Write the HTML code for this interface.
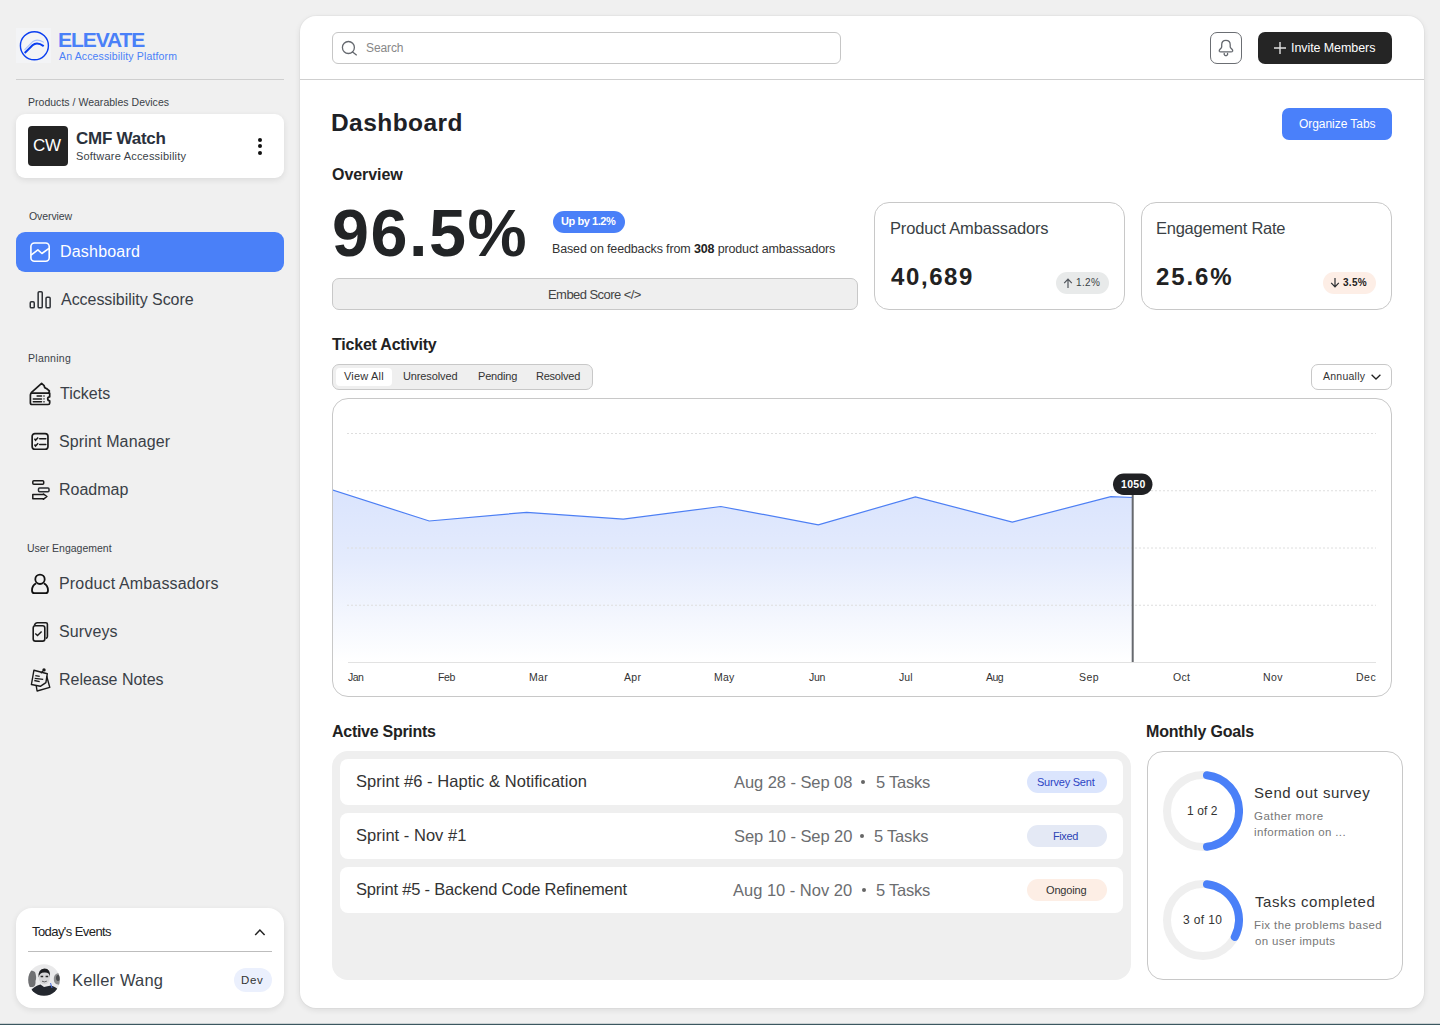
<!DOCTYPE html>
<html><head><meta charset="utf-8">
<style>
*{box-sizing:border-box;margin:0;padding:0}
html,body{width:1440px;height:1025px;overflow:hidden;background:#f0f0f0;font-family:"Liberation Sans",sans-serif;color:#222}
.a{position:absolute}
.t{position:absolute;white-space:nowrap;line-height:1}
</style></head>
<body>
<svg class="a" style="left:0;top:1020px" width="1440" height="5" viewBox="0 0 1440 5"><rect x="0" y="3.8" width="1440" height="1.2" fill="#3b5760"/></svg>
<!-- ===== SIDEBAR ===== -->
<div class="a" style="left:16px;top:28px;width:35px;height:35px;background:#f3f4f6"></div>
<svg class="a" style="left:14px;top:26px" width="40" height="40" viewBox="0 0 40 40">
  <circle cx="20.4" cy="19.75" r="14" fill="none" stroke="#0a3ef0" stroke-width="1.4"/>
  <path d="M10.5 23.8 L18.5 15.8 Q23 12.2 29.9 16.4" fill="none" stroke="#a9c0fb" stroke-width="1.1"/>
  <path d="M10.7 27 L18.5 19.2 Q23 15.2 29.7 20.1" fill="none" stroke="#0a3ef0" stroke-width="2"/>
</svg>
<div class="a" style="left:16px;top:79px;width:268px;height:1px;background:#cfcfcf"></div>
<div class="a" style="left:16px;top:114px;width:268px;height:64px;background:#fff;border-radius:9px;box-shadow:0 2px 6px rgba(0,0,0,.09)"></div>
<div class="a" style="left:28px;top:126px;width:40px;height:40px;background:#242424;border-radius:4px"></div>
<div class="a" style="left:258px;top:137.6px;width:4px;height:4px;border-radius:2px;background:#111"></div>
<div class="a" style="left:258px;top:144px;width:4px;height:4px;border-radius:2px;background:#111"></div>
<div class="a" style="left:258px;top:150.5px;width:4px;height:4px;border-radius:2px;background:#111"></div>

<div class="a" style="left:16px;top:232px;width:268px;height:40px;background:#4a80f8;border-radius:9px"></div>
<svg class="a" style="left:28px;top:240px" width="24" height="24" viewBox="0 0 24 24">
  <rect x="2.9" y="3" width="18.3" height="18.3" rx="3.5" fill="none" stroke="#fff" stroke-width="1.6"/>
  <path d="M3 15.2 L9.9 9.9 L13.9 13.5 L21 8.4" fill="none" stroke="#fff" stroke-width="1.6" stroke-linejoin="round"/>
</svg>
<svg class="a" style="left:28px;top:288px" width="24" height="24" viewBox="0 0 24 24">
  <rect x="2.25" y="13.85" width="4" height="5.9" rx="1.1" fill="none" stroke="#2e3136" stroke-width="1.5"/>
  <rect x="10.15" y="3.75" width="4.1" height="16" rx="1.1" fill="none" stroke="#2e3136" stroke-width="1.5"/>
  <rect x="18.05" y="9.15" width="4.1" height="10.6" rx="1.1" fill="none" stroke="#2e3136" stroke-width="1.5"/>
</svg>
<!-- tickets -->
<svg class="a" style="left:28px;top:382px" width="24" height="24" viewBox="0 0 24 24">
  <path d="M3 10.9 L13.6 1.4 L16.1 3.6 Q16.3 6 18.5 6.5 L21.4 8.9 Q21.6 10.2 20.2 10.9" fill="none" stroke="#1a1a1a" stroke-width="1.7" stroke-linejoin="round"/>
  <path d="M4 11.2 H21.7 V14.8 A2 2 0 0 0 21.7 18.8 V21 Q21.7 22.5 20.2 22.5 H4 Q2.4 22.5 2.4 20.9 V12.8 Q2.4 11.2 4 11.2 Z" fill="none" stroke="#1a1a1a" stroke-width="1.7" stroke-linejoin="round"/>
  <path d="M9.1 14 H13.5 M5.3 16.9 H13.5 M5.3 19.8 H13.5" stroke="#1a1a1a" stroke-width="1.5" stroke-linecap="round"/>
  <path d="M16 13.3 V14.7 M16 16.2 V17.6 M16 19.1 V20.5" stroke="#333" stroke-width="1.3"/>
</svg>
<!-- sprint manager -->
<svg class="a" style="left:28px;top:430px" width="24" height="24" viewBox="0 0 24 24">
  <rect x="4.15" y="3.55" width="15.8" height="15.7" rx="2.8" fill="none" stroke="#1a1a1a" stroke-width="1.7"/>
  <path d="M6.5 8.7 L7.5 10.2 L10.2 7.4 M6.5 14.5 L7.5 16 L10.2 13.2" fill="none" stroke="#1a1a1a" stroke-width="1.5"/>
  <path d="M11.7 8.7 H17.8 M11.7 14.5 H17.8" stroke="#1a1a1a" stroke-width="1.5" stroke-linecap="round"/>
</svg>
<!-- roadmap -->
<svg class="a" style="left:28px;top:478px" width="24" height="24" viewBox="0 0 24 24">
  <rect x="4.8" y="2.8" width="10.9" height="3.5" rx="1" fill="none" stroke="#1a1a1a" stroke-width="1.5"/>
  <rect x="10.5" y="9.9" width="10.5" height="3.8" rx="1" fill="none" stroke="#2a2d30" stroke-width="1.5"/>
  <path d="M4.8 16.6 H15.3 V15.9 L18.9 18.5 L15.3 21.3 V20.7 H4.8 Z" fill="none" stroke="#1a1a1a" stroke-width="1.5" stroke-linejoin="round"/>
</svg>
<!-- person -->
<svg class="a" style="left:28px;top:572px" width="24" height="24" viewBox="0 0 24 24">
  <circle cx="12" cy="7.3" r="4.7" fill="none" stroke="#111" stroke-width="1.8"/>
  <path d="M8 11.4 Q4 13.6 4 18.4 Q4 21.1 6.4 21.1 H17.6 Q20 21.1 20 18.4 Q20 13.6 16 11.4" fill="none" stroke="#111" stroke-width="1.8" stroke-linejoin="round"/>
</svg>
<!-- surveys -->
<svg class="a" style="left:28px;top:620px" width="24" height="24" viewBox="0 0 24 24">
  <path d="M6.4 5.6 Q7 2.7 9.4 2.7 H17.9 Q19.4 2.7 19.4 4.2 V16.6 Q19.4 18.2 17.8 18.4" fill="none" stroke="#1a1a1a" stroke-width="1.6"/>
  <rect x="5.2" y="5.7" width="11.6" height="15.4" rx="2.2" fill="none" stroke="#1a1a1a" stroke-width="1.6"/>
  <path d="M7.3 13.6 L9.5 15.6 L13.6 11.4" fill="none" stroke="#1a1a1a" stroke-width="1.4"/>
</svg>
<!-- release notes -->
<svg class="a" style="left:28px;top:668px" width="24" height="24" viewBox="0 0 24 24">
  <path d="M8.2 17.7 L9.1 23 L21.8 19.4 L18.7 8.3" fill="none" stroke="#1a1a1a" stroke-width="1.4" stroke-linejoin="round"/>
  <path d="M5.9 2.3 L19.3 5.7 L17.9 14.7 L12.3 18.3 L3.4 16.5 Z" fill="none" stroke="#1a1a1a" stroke-width="1.4" stroke-linejoin="round"/>
  <path d="M7.3 7.6 L11.7 8.4 M6.7 10.3 L15.2 11.4 M6.3 12.5 L11.7 13.6" stroke="#1a1a1a" stroke-width="1.3"/>
  <circle cx="16" cy="1.9" r="1.7" fill="#1a1a1a"/>
  <path d="M15 3 L12.8 5.2" stroke="#1a1a1a" stroke-width="1.3"/>
</svg>

<!-- today's events -->
<div class="a" style="left:16px;top:908px;width:268px;height:100px;background:#fff;border-radius:16px;box-shadow:0 2px 6px rgba(0,0,0,.09)"></div>
<svg class="a" style="left:253px;top:927px" width="14" height="10" viewBox="0 0 14 10"><path d="M2.2 8 L6.9 3 L11.6 8" fill="none" stroke="#222" stroke-width="1.5"/></svg>
<div class="a" style="left:28px;top:951px;width:244px;height:1px;background:#bdbdbd"></div>
<svg class="a" style="left:28px;top:964px" width="32" height="32" viewBox="0 0 32 32">
  <defs><clipPath id="av"><circle cx="16" cy="16" r="15.8"/></clipPath></defs>
  <g clip-path="url(#av)">
    <rect width="32" height="32" fill="#e9e9ea"/>
    <path d="M0 8 Q3 5 7 8 Q9 13 7.5 17 Q8 22 5 23 L0 23 Z" fill="#6f7072"/>
    <path d="M32 9 Q27 9 26 13 Q25 18 28 20 L32 21 Z" fill="#8a8b8d"/><ellipse cx="30" cy="14" rx="2" ry="3" fill="#4a4b4d"/>
    <ellipse cx="16.3" cy="13" rx="5.6" ry="7.4" fill="#d6d6d7"/>
    <path d="M10.6 13.5 Q9.8 5 16.5 4.6 Q22.8 4.8 22 13 Q21.3 8.2 16.5 8.6 Q11.6 8.4 10.6 13.5Z" fill="#1c1d20"/>
    <path d="M12.6 12.4 h2.6 M17.6 12.4 h2.6" stroke="#2a2a2a" stroke-width="1.5"/><path d="M14 17.2 Q16.3 18.6 18.8 17.2" fill="none" stroke="#555" stroke-width="0.9"/>
    <path d="M0 32 L2.5 27 Q6 22 12.5 20.5 L16 23 L23 21.5 Q28.5 23 32 27.5 L32 32 Z" fill="#23272e"/>
    <path d="M22.5 19 L24 24" stroke="#4a6ee0" stroke-width="1"/>
  </g>
</svg>
<div class="a" style="left:234px;top:968px;width:38px;height:23.5px;border-radius:12px;background:#ebf0fd"></div>

<!-- ===== MAIN ===== -->
<div class="a" style="left:300px;top:16px;width:1124px;height:992px;background:#fff;border-radius:16px;box-shadow:0 0 0 1px rgba(0,0,0,.025),0 2px 6px rgba(0,0,0,.09)"></div>
<div class="a" style="left:332px;top:32px;width:509px;height:32px;border:1px solid #c6c6c6;border-radius:6px"></div>
<svg class="a" style="left:339px;top:38px" width="20" height="20" viewBox="0 0 20 20"><circle cx="9.4" cy="9.5" r="6" fill="none" stroke="#64686e" stroke-width="1.3"/><path d="M13.6 13.9 L17.4 16.9" stroke="#64686e" stroke-width="1.3" stroke-linecap="round"/></svg>
<div class="a" style="left:1210px;top:32px;width:32px;height:32px;border:1.2px solid #6b6e73;border-radius:7px"></div>
<svg class="a" style="left:1216px;top:38px" width="20" height="20" viewBox="0 0 20 20"><path d="M5.7 8.8 V6.8 Q5.7 2.4 9.9 2.4 Q14.2 2.4 14.2 6.8 V8.8 Q14.2 9.6 15 10.3 L16 11.3 Q17 12.3 16.6 13.2 Q16.2 13.9 15 13.9 H4.8 Q3.6 13.9 3.3 13.2 Q3 12.3 4 11.3 L5 10.3 Q5.7 9.6 5.7 8.8 Z" fill="none" stroke="#64686e" stroke-width="1.3" stroke-linejoin="round"/><path d="M8.4 14.9 A1.75 1.75 0 1 0 11.4 14.9" fill="none" stroke="#64686e" stroke-width="1.3"/></svg>
<div class="a" style="left:1258px;top:32px;width:134px;height:32px;background:#252525;border-radius:7px"></div>
<svg class="a" style="left:1272px;top:40px" width="16" height="16" viewBox="0 0 16 16"><path d="M8 2 V14 M2 8 H14" stroke="#e0e0e0" stroke-width="1.4"/></svg>
<div class="a" style="left:300px;top:79px;width:1124px;height:1px;background:#cfcfcf"></div>
<div class="a" style="left:1282px;top:107.5px;width:110px;height:32px;background:#4a80fa;border-radius:7px"></div>

<div class="a" style="left:553px;top:211px;width:72px;height:22px;background:#4a80f8;border-radius:11px"></div>
<div class="a" style="left:332px;top:278px;width:526px;height:32px;background:#efefef;border:1px solid #c8c8c8;border-radius:7px"></div>

<div class="a" style="left:874px;top:202px;width:251px;height:108px;border:1px solid #c8c8c8;border-radius:15px"></div>
<div class="a" style="left:1056px;top:272px;width:53px;height:22px;background:#e8eaea;border-radius:11px"></div>
<svg class="a" style="left:1062px;top:277px" width="12" height="12" viewBox="0 0 12 12"><path d="M6 11 V2.6 M2.2 6.2 L6 2.2 L9.8 6.2" fill="none" stroke="#50555c" stroke-width="1.2"/></svg>
<div class="a" style="left:1141px;top:202px;width:251px;height:108px;border:1px solid #c8c8c8;border-radius:15px"></div>
<div class="a" style="left:1323px;top:272px;width:53px;height:22px;background:#fdeee6;border-radius:11px"></div>
<svg class="a" style="left:1329px;top:277px" width="12" height="12" viewBox="0 0 12 12"><path d="M6 1 V9.4 M2.2 5.8 L6 9.8 L9.8 5.8" fill="none" stroke="#2a2d31" stroke-width="1.2"/></svg>

<div class="a" style="left:332px;top:364px;width:261px;height:25.5px;background:#efefef;border:1px solid #c8c8c8;border-radius:7px"></div>
<div class="a" style="left:336px;top:368px;width:56px;height:18px;background:#fff;border-radius:4px"></div>
<div class="a" style="left:1311px;top:364px;width:81px;height:25.5px;border:1px solid #c8c8c8;border-radius:7px"></div>
<svg class="a" style="left:1369px;top:370px" width="14" height="14" viewBox="0 0 14 14"><path d="M2.6 4.8 L7 9 L11.4 4.8" fill="none" stroke="#222" stroke-width="1.3"/></svg>

<!-- chart -->
<div class="a" style="left:332px;top:398px;width:1060px;height:298.5px;border:1px solid #c8c8c8;border-radius:16px;overflow:hidden">
<svg class="a" style="left:-1px;top:-1px" width="1060" height="299" viewBox="332 398 1060 299">
  <defs><linearGradient id="ar" x1="0" y1="0" x2="0" y2="1">
    <stop offset="0" stop-color="#dae4fd"/><stop offset="0.4" stop-color="#e4ebfd"/><stop offset="0.75" stop-color="#f4f7fe"/><stop offset="1" stop-color="#ffffff"/></linearGradient></defs>
  <path d="M332 489.8 L429.2 521 L526.7 512.3 L623.3 519.2 L720.8 506.5 L818.3 524.8 L915.4 496.9 L1012.3 522.1 L1110.8 496.7 L1132.7 497.5 L1132.7 662 L332 662 Z" fill="url(#ar)"/>
  <g stroke="#dedede" stroke-width="1" stroke-dasharray="2 2">
    <path d="M347 433.5 H1376 M347 490.75 H1376 M347 548 H1376 M347 605.25 H1376"/>
  </g>
  <path d="M348 662.5 H1376" stroke="#e2e2e2" stroke-width="1"/>
  <path d="M332 489.8 L429.2 521 L526.7 512.3 L623.3 519.2 L720.8 506.5 L818.3 524.8 L915.4 496.9 L1012.3 522.1 L1110.8 496.7 L1132.7 497.5" fill="none" stroke="#4d7ff4" stroke-width="1.2"/>
  <path d="M1132.7 494 V662" stroke="#66696e" stroke-width="2"/>
  <rect x="1113" y="473.5" width="39.5" height="21.5" rx="10.75" fill="#202124"/>
</svg>
</div>

<!-- active sprints -->
<div class="a" style="left:332px;top:751px;width:799px;height:229px;background:#efefef;border-radius:16px"></div>
<div class="a" style="left:340px;top:759px;width:783px;height:46px;background:#fff;border-radius:8px"></div>
<div class="a" style="left:340px;top:813px;width:783px;height:46px;background:#fff;border-radius:8px"></div>
<div class="a" style="left:340px;top:867px;width:783px;height:46px;background:#fff;border-radius:8px"></div>
<div class="a" style="left:861.4px;top:780px;width:4px;height:4px;border-radius:2px;background:#666"></div>
<div class="a" style="left:860.3px;top:834px;width:4px;height:4px;border-radius:2px;background:#666"></div>
<div class="a" style="left:862.3px;top:888px;width:4px;height:4px;border-radius:2px;background:#666"></div>
<div class="a" style="left:1027px;top:771px;width:80px;height:22px;border-radius:11px;background:#dbe5fd"></div>
<div class="a" style="left:1027px;top:825px;width:80px;height:22px;border-radius:11px;background:#e4e9f5"></div>
<div class="a" style="left:1027px;top:879px;width:80px;height:22px;border-radius:11px;background:#fdeee5"></div>

<!-- monthly goals -->
<div class="a" style="left:1147px;top:751px;width:256px;height:229px;border:1px solid #c8c8c8;border-radius:16px"></div>
<svg class="a" style="left:1163px;top:771px" width="80" height="80" viewBox="0 0 80 80">
  <circle cx="40" cy="40" r="36" fill="none" stroke="#efefef" stroke-width="8"/>
  <path d="M44.01 4.22 A36 36 0 0 1 44.01 75.78" fill="none" stroke="#4a80f8" stroke-width="8" stroke-linecap="round"/>
</svg>
<svg class="a" style="left:1163px;top:880px" width="80" height="80" viewBox="0 0 80 80">
  <circle cx="40" cy="40" r="36" fill="none" stroke="#efefef" stroke-width="8"/>
  <path d="M44.01 4.22 A36 36 0 0 1 71.79 56.90" fill="none" stroke="#4a80f8" stroke-width="8" stroke-linecap="round"/>
</svg>

<div class="t" style="left:58px;top:29px;font-size:21px;color:#4a80f8;font-weight:bold;letter-spacing:-1.07px">ELEVATE</div>
<div class="t" style="left:59px;top:51px;font-size:10.5px;color:#4a80f8;letter-spacing:0.15px">An Accessibility Platform</div>
<div class="t" style="left:28px;top:97px;font-size:10.5px;color:#3a3f47;letter-spacing:0.02px">Products / Wearables Devices</div>
<div class="t" style="left:33px;top:137px;font-size:17px;color:#ffffff;letter-spacing:-0.4px">CW</div>
<div class="t" style="left:76px;top:130px;font-size:17px;color:#2a313c;font-weight:bold;letter-spacing:-0.25px">CMF Watch</div>
<div class="t" style="left:76px;top:151px;font-size:11px;color:#3a3f47;letter-spacing:0.2px">Software Accessibility</div>
<div class="t" style="left:29px;top:211px;font-size:10.5px;color:#3a3f47;letter-spacing:-0.08px">Overview</div>
<div class="t" style="left:60px;top:244px;font-size:16px;color:#ffffff;letter-spacing:0.2px">Dashboard</div>
<div class="t" style="left:61px;top:292px;font-size:16px;color:#3a3f47;letter-spacing:-0.04px">Accessibility Score</div>
<div class="t" style="left:28px;top:353px;font-size:10.5px;color:#3a3f47;letter-spacing:0.27px">Planning</div>
<div class="t" style="left:60px;top:386px;font-size:16px;color:#3a3f47;letter-spacing:0.03px">Tickets</div>
<div class="t" style="left:59px;top:434px;font-size:16px;color:#3a3f47;letter-spacing:0.13px">Sprint Manager</div>
<div class="t" style="left:59px;top:482px;font-size:16px;color:#3a3f47">Roadmap</div>
<div class="t" style="left:27px;top:543px;font-size:10.5px;color:#3a3f47">User Engagement</div>
<div class="t" style="left:59px;top:576px;font-size:16px;color:#3a3f47;letter-spacing:0.16px">Product Ambassadors</div>
<div class="t" style="left:59px;top:624px;font-size:16px;color:#3a3f47;letter-spacing:0.13px">Surveys</div>
<div class="t" style="left:59px;top:672px;font-size:16px;color:#3a3f47;letter-spacing:-0.03px">Release Notes</div>
<div class="t" style="left:32px;top:925px;font-size:13px;color:#222222;letter-spacing:-0.57px">Today's Events</div>
<div class="t" style="left:72px;top:972px;font-size:16.5px;color:#3a3f47;letter-spacing:0.17px">Keller Wang</div>
<div class="t" style="left:241px;top:975px;font-size:11.5px;color:#333333;letter-spacing:0.7px">Dev</div>
<div class="t" style="left:366px;top:42px;font-size:12px;color:#888888;letter-spacing:-0.1px">Search</div>
<div class="t" style="left:1291px;top:42px;font-size:12.5px;color:#ffffff;letter-spacing:-0.08px">Invite Members</div>
<div class="t" style="left:331px;top:111px;font-size:24.5px;color:#1e2126;font-weight:bold;letter-spacing:0.43px">Dashboard</div>
<div class="t" style="left:1299px;top:118px;font-size:12px;color:#ffffff;letter-spacing:-0.05px">Organize Tabs</div>
<div class="t" style="left:332px;top:167px;font-size:16px;color:#222222;font-weight:bold;letter-spacing:-0.06px">Overview</div>
<div class="t" style="left:332px;top:200px;font-size:66.5px;color:#222426;font-weight:bold;letter-spacing:1.5px">96.5%</div>
<div class="t" style="left:561px;top:216px;font-size:11px;color:#ffffff;font-weight:bold;letter-spacing:-0.43px">Up by 1.2%</div>
<div class="t" style="left:552px;top:243px;font-size:12.5px;color:#333333;letter-spacing:-0.14px">Based on feedbacks from <b style="color:#222">308</b> product ambassadors</div>
<div class="t" style="left:548px;top:288px;font-size:13px;color:#444444;letter-spacing:-0.56px">Embed Score &lt;/&gt;</div>
<div class="t" style="left:890px;top:220px;font-size:16.5px;color:#3a3f45;letter-spacing:-0.16px">Product Ambassadors</div>
<div class="t" style="left:891px;top:265px;font-size:24px;color:#222222;font-weight:bold;letter-spacing:1.6px">40,689</div>
<div class="t" style="left:1076px;top:278px;font-size:10px;color:#3a3f45;letter-spacing:0.37px">1.2%</div>
<div class="t" style="left:1156px;top:220px;font-size:16.5px;color:#3a3f45;letter-spacing:-0.25px">Engagement Rate</div>
<div class="t" style="left:1156px;top:265px;font-size:24px;color:#222222;font-weight:bold;letter-spacing:1.9px">25.6%</div>
<div class="t" style="left:1343px;top:278px;font-size:10px;color:#222222;font-weight:bold;letter-spacing:0.27px">3.5%</div>
<div class="t" style="left:332px;top:337px;font-size:16px;color:#222222;font-weight:bold;letter-spacing:-0.21px">Ticket Activity</div>
<div class="t" style="left:344px;top:371px;font-size:11px;color:#333333;letter-spacing:0.19px">View All</div>
<div class="t" style="left:403px;top:371px;font-size:11px;color:#333333;letter-spacing:-0.12px">Unresolved</div>
<div class="t" style="left:478px;top:371px;font-size:11px;color:#333333;letter-spacing:-0.18px">Pending</div>
<div class="t" style="left:536px;top:371px;font-size:11px;color:#333333;letter-spacing:-0.23px">Resolved</div>
<div class="t" style="left:1323px;top:371px;font-size:10.5px;color:#333333;letter-spacing:0.24px">Annually</div>
<div class="t" style="left:1121px;top:479px;font-size:10.5px;color:#ffffff;font-weight:bold;letter-spacing:0.3px">1050</div>
<div class="t" style="left:348px;top:672px;font-size:10.5px;color:#333333;letter-spacing:-0.5px">Jan</div>
<div class="t" style="left:438px;top:672px;font-size:10.5px;color:#333333;letter-spacing:-0.35px">Feb</div>
<div class="t" style="left:529px;top:672px;font-size:10.5px;color:#333333;letter-spacing:0.35px">Mar</div>
<div class="t" style="left:624px;top:672px;font-size:10.5px;color:#333333;letter-spacing:0.35px">Apr</div>
<div class="t" style="left:714px;top:672px;font-size:10.5px;color:#333333;letter-spacing:0.2px">May</div>
<div class="t" style="left:809px;top:672px;font-size:10.5px;color:#333333;letter-spacing:-0.25px">Jun</div>
<div class="t" style="left:899px;top:672px;font-size:10.5px;color:#333333;letter-spacing:0.05px">Jul</div>
<div class="t" style="left:986px;top:672px;font-size:10.5px;color:#333333;letter-spacing:-0.5px">Aug</div>
<div class="t" style="left:1079px;top:672px;font-size:10.5px;color:#333333;letter-spacing:0.4px">Sep</div>
<div class="t" style="left:1173px;top:672px;font-size:10.5px;color:#333333;letter-spacing:0.3px">Oct</div>
<div class="t" style="left:1263px;top:672px;font-size:10.5px;color:#333333;letter-spacing:0.45px">Nov</div>
<div class="t" style="left:1356px;top:672px;font-size:10.5px;color:#333333;letter-spacing:0.5px">Dec</div>
<div class="t" style="left:332px;top:724px;font-size:16px;color:#222222;font-weight:bold;letter-spacing:-0.28px">Active Sprints</div>
<div class="t" style="left:1146px;top:724px;font-size:16px;color:#222222;font-weight:bold;letter-spacing:-0.17px">Monthly Goals</div>
<div class="t" style="left:356px;top:773px;font-size:16.5px;color:#333333;letter-spacing:0.05px">Sprint #6 - Haptic &amp; Notification</div>
<div class="t" style="left:356px;top:827px;font-size:16.5px;color:#333333;letter-spacing:0.02px">Sprint - Nov #1</div>
<div class="t" style="left:356px;top:881px;font-size:16.5px;color:#333333;letter-spacing:-0.2px">Sprint #5 - Backend Code Refinement</div>
<div class="t" style="left:734px;top:774px;font-size:16.5px;color:#6b6d70;letter-spacing:-0.06px">Aug 28 - Sep 08</div>
<div class="t" style="left:876px;top:774px;font-size:16.5px;color:#6b6d70;letter-spacing:-0.22px">5 Tasks</div>
<div class="t" style="left:734px;top:828px;font-size:16.5px;color:#6b6d70;letter-spacing:-0.06px">Sep 10 - Sep 20</div>
<div class="t" style="left:874px;top:828px;font-size:16.5px;color:#6b6d70;letter-spacing:-0.2px">5 Tasks</div>
<div class="t" style="left:733px;top:882px;font-size:16.5px;color:#6b6d70;letter-spacing:-0.01px">Aug 10 - Nov 20</div>
<div class="t" style="left:876px;top:882px;font-size:16.5px;color:#6b6d70;letter-spacing:-0.25px">5 Tasks</div>
<div class="t" style="left:1037px;top:777px;font-size:11px;color:#2c44c4;letter-spacing:-0.22px">Survey Sent</div>
<div class="t" style="left:1053px;top:831px;font-size:11px;color:#2c44b4;letter-spacing:-0.4px">Fixed</div>
<div class="t" style="left:1046px;top:885px;font-size:11px;color:#333333;letter-spacing:-0.17px">Ongoing</div>
<div class="t" style="left:1187px;top:805px;font-size:12px;color:#333333;letter-spacing:0.08px">1 of 2</div>
<div class="t" style="left:1254px;top:785px;font-size:15px;color:#333333;letter-spacing:0.52px">Send out survey</div>
<div class="t" style="left:1254px;top:811px;font-size:11.5px;color:#777777;letter-spacing:0.45px">Gather more</div>
<div class="t" style="left:1254px;top:827px;font-size:11.5px;color:#777777;letter-spacing:0.35px">information on ...</div>
<div class="t" style="left:1183px;top:914px;font-size:12px;color:#333333;letter-spacing:0.37px">3 of 10</div>
<div class="t" style="left:1255px;top:894px;font-size:15px;color:#333333;letter-spacing:0.58px">Tasks completed</div>
<div class="t" style="left:1254px;top:920px;font-size:11.5px;color:#777777;letter-spacing:0.39px">Fix the problems based</div>
<div class="t" style="left:1255px;top:936px;font-size:11.5px;color:#777777;letter-spacing:0.36px">on user imputs</div>
</body></html>
